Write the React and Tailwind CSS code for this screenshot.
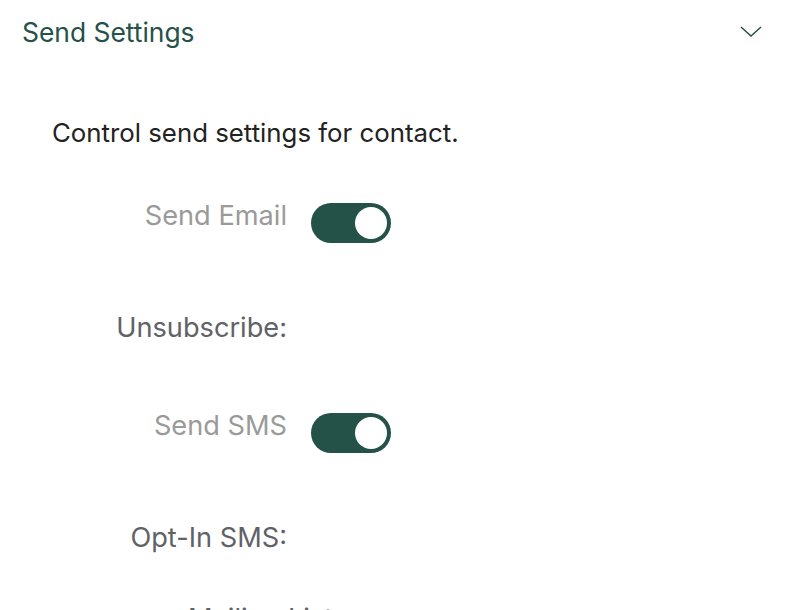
import React from "react";

function Toggle() {
  return (
    <div className="w-[80px] h-[40px] rounded-full bg-[#245249] flex items-center justify-end pr-[4px] shrink-0">
      <div className="w-[32px] h-[32px] rounded-full bg-white" />
    </div>
  );
}

function Row({ label, muted, toggle, className = "" }) {
  return (
    <div className={"flex items-start " + className}>
      <div
        className={
          "w-[287px] shrink-0 text-right text-[27.2px] leading-[26px] whitespace-nowrap " +
          (muted ? "text-[#9a9a9a]" : "text-[#5f6266]")
        }
      >
        {label}
      </div>
      {toggle ? <div className="ml-[24px]"><Toggle /></div> : null}
    </div>
  );
}

export default function App() {
  return (
    <div className="w-[790px] h-[610px] overflow-hidden bg-white font-['Inter',sans-serif]">
      <div className="flex items-center justify-between pl-[22px] pr-[28px] pt-[17px] h-[47px]">
        <div className="text-[26.4px] leading-[30px] text-[#245249]">Send Settings</div>
        <svg width="22" height="12" viewBox="0 0 22 12" fill="none">
          <path d="M1 1 L11 10 L21 1" stroke="#245249" strokeWidth="1.5" />
        </svg>
      </div>
      <div className="pl-[52px] pt-[71px] text-[25.8px] leading-[30px] text-[#222]">
        Control send settings for contact.
      </div>
      <div className="flex flex-col gap-[72px] mt-[55px]">
        <Row label="Send Email" muted toggle />
        <Row label="Unsubscribe:" />
        <Row label="Send SMS" muted toggle />
        <Row label="Opt-In SMS:" />
      </div>
      <div className="pl-[188px] mt-[55px] text-[27.2px] leading-[26px] text-[#5f6266] whitespace-nowrap">
        Mailing Lists:
      </div>
    </div>
  );
}
